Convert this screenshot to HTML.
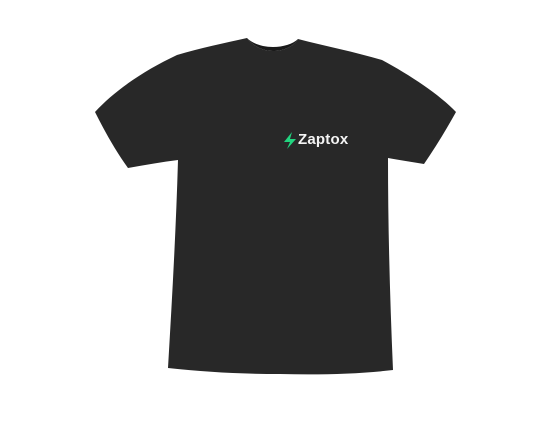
<!DOCTYPE html>
<html><head><style>
html,body{margin:0;padding:0;background:#fff;width:550px;height:423px;overflow:hidden;}
svg{position:absolute;left:0;top:0;}
.t{position:absolute;left:298px;top:131px;font-family:"Liberation Sans",sans-serif;font-weight:bold;font-size:15px;color:#f4f4f4;letter-spacing:0.2px;}
</style></head><body>
<svg width="550" height="423" viewBox="0 0 550 423">
<path d="M247,38 C255,48 265,51 273,51 C283,51 293,47 298,39 C325,46 355,52 382,60 C410,75 440,95 456,112 C446,130 435,148 424,164 C412,162 399,160 388,158 C388,230 390,300 393,370 C360,374 320,375 280,374 C240,374 205,372 168,368 C172,300 176,230 178,160 C162,162 145,165 128,168 C115,150 104,130 95,112 C115,90 145,70 177,55 C200,48 225,43 247,38 Z" fill="#282828"/>
<path d="M247,38 C255,48 265,51 273,51 C283,51 293,47 298,39 C293,44 283,47 273,47 C263,47 253,44 247,38 Z" fill="#1a1a1a"/>
<path d="M292,132 L284,142 L290,142 L287,149 L296,139 L290,139 Z" fill="#22d47f"/>
</svg>
<div class="t">Zaptox</div>
</body></html>
